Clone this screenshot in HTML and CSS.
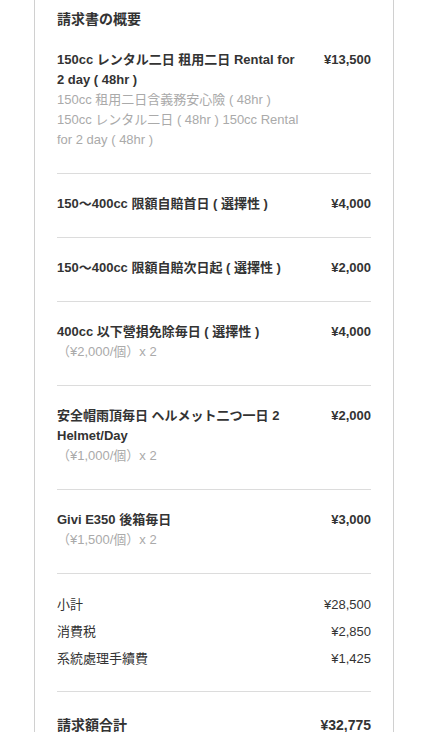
FILE: index.html
```html
<!DOCTYPE html>
<html lang="ja">
<head>
<meta charset="utf-8">
<link rel="stylesheet" href="styles.css">
</head>
<body>
<div class="card">
  <h2 class="title">請求書の概要</h2>
  <div class="item">
    <div class="name">
      <div class="main">150cc レンタル二日 租用二日 Rental for 2 day ( 48hr )</div>
      <div class="sub">150cc 租用二日含義務安心險 ( 48hr )</div>
      <div class="sub">150cc レンタル二日 ( 48hr ) 150cc Rental for 2 day ( 48hr )</div>
    </div>
    <div class="price">¥13,500</div>
  </div>
  <div class="item">
    <div class="name"><div class="main">150～400cc 限額自賠首日 ( 選擇性 )</div></div>
    <div class="price">¥4,000</div>
  </div>
  <div class="item">
    <div class="name"><div class="main">150～400cc 限額自賠次日起 ( 選擇性 )</div></div>
    <div class="price">¥2,000</div>
  </div>
  <div class="item">
    <div class="name">
      <div class="main">400cc 以下營損免除毎日 ( 選擇性 )</div>
      <div class="sub">（¥2,000/個）x 2</div>
    </div>
    <div class="price">¥4,000</div>
  </div>
  <div class="item">
    <div class="name">
      <div class="main">安全帽雨頂毎日 ヘルメット二つ一日 2 Helmet/Day</div>
      <div class="sub">（¥1,000/個）x 2</div>
    </div>
    <div class="price">¥2,000</div>
  </div>
  <div class="item">
    <div class="name">
      <div class="main">Givi E350 後箱毎日</div>
      <div class="sub">（¥1,500/個）x 2</div>
    </div>
    <div class="price">¥3,000</div>
  </div>
  <div class="summary">
    <div class="row"><span>小計</span><span>¥28,500</span></div>
    <div class="row"><span>消費税</span><span>¥2,850</span></div>
    <div class="row"><span>系統處理手續費</span><span>¥1,425</span></div>
  </div>
  <div class="total"><span>請求額合計</span><span>¥32,775</span></div>
</div>
</body>
</html>
```
FILE: styles.css
```css
html, body {
  margin: 0;
  padding: 0;
  background: #fff;
}
body {
  font-family: "Liberation Sans", Arial, "Noto Sans CJK TC", sans-serif;
  color: #333;
  font-size: 13px;
  line-height: 20px;
}
.card {
  margin-left: 34px;
  width: 360px;
  box-sizing: border-box;
  border-left: 1px solid #d0d0d0;
  border-right: 1px solid #d0d0d0;
  padding: 0 22px;
  min-height: 732px;
}
.title {
  margin: 0;
  padding-top: 8px;
  font-size: 14px;
  line-height: 22px;
  font-weight: bold;
}
.item {
  display: flex;
  justify-content: space-between;
  padding: 20px 0 23px;
  border-bottom: 1px solid #dcdcdc;
}
.name {
  width: 242px;
}
.main {
  font-weight: bold;
}
.sub {
  color: #aaa;
}
.price {
  font-weight: bold;
  white-space: nowrap;
}
.summary {
  padding: 17px 0 19px;
  border-bottom: 1px solid #dcdcdc;
}
.row {
  display: flex;
  justify-content: space-between;
  line-height: 27px;
}
.total {
  display: flex;
  justify-content: space-between;
  padding-top: 22px;
  font-size: 14px;
  line-height: 22px;
  font-weight: bold;
}
```
